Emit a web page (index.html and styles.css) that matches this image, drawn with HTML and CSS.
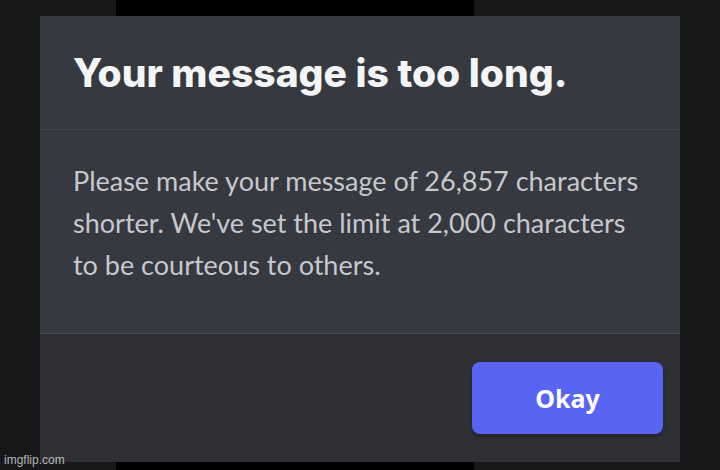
FILE: index.html
```html
<!DOCTYPE html>
<html lang="en">
<head>
  <meta charset="UTF-8" />
  <title>Message too long</title>
  <link rel="stylesheet" href="styles.css">
</head>
<body>

  <div class="stage">
    <div class="strip"><div class="strip-bar"></div></div>

    <div class="modal">
      <div class="modal-header">
        <h2>Your message is too long.</h2>
      </div>
      <div class="modal-body">
        <p>Please make your message of 26,857 characters shorter. We've set the limit at 2,000 characters to be courteous to others.</p>
      </div>
      <div class="modal-footer">
        <button class="btn">Okay</button>
      </div>
    </div>

    <div class="strip strip-bottom"><div class="strip-bar"></div></div>
    <span class="watermark">imgflip.com</span>
  </div>

</body>
</html>
```

FILE: styles.css
```css
:root {
  --bg: #17181a;
  --modal: #373940;
  --footer: #2e3035;
  --line: #45474d;
  --blurple: #5865f2;
}

body {
  margin: 0;
  background: var(--bg);
  overflow: hidden;
}

.stage {
  position: relative;
  width: 720px;
  height: 470px;
  display: flex;
  flex-direction: column;
}

.strip {
  height: 16px;
  padding-left: 116px;
}

.strip-bottom {
  height: 8px;
}

.strip-bar {
  width: 358px;
  height: 100%;
  background: #000;
}

.modal {
  margin: 0 40px;
  height: 446px;
  display: flex;
  flex-direction: column;
  background: var(--modal);
}

.modal-header {
  height: 113px;
  display: flex;
  align-items: center;
  padding-left: 33px;
  border-bottom: 1px solid var(--line);
}

.modal-header h2 {
  margin: 0;
  font-family: Inter, sans-serif;
  font-weight: 800;
  font-size: 39px;
  color: #f4f5f6;
}

.modal-body {
  flex: 1;
  padding: 0 33px;
  border-bottom: 1px solid var(--line);
}

.modal-body p {
  margin: 30px 0 0;
  font-family: Lato, sans-serif;
  font-size: 27px;
  line-height: 42px;
  color: #c6c8cd;
}

.modal-footer {
  height: 128px;
  display: flex;
  justify-content: flex-end;
  align-items: center;
  padding-right: 17px;
  background: var(--footer);
}

.btn {
  width: 191px;
  height: 72px;
  border: none;
  border-radius: 8px;
  background: var(--blurple);
  color: #fff;
  font-family: "Noto Sans", sans-serif;
  font-weight: 700;
  font-size: 25px;
  box-shadow: 0 2px 4px rgba(0, 0, 0, 0.35);
}

.watermark {
  position: absolute;
  left: 4px;
  bottom: 3px;
  font-family: "Liberation Sans", sans-serif;
  font-size: 12px;
  color: #b8b8b8;
}
```
